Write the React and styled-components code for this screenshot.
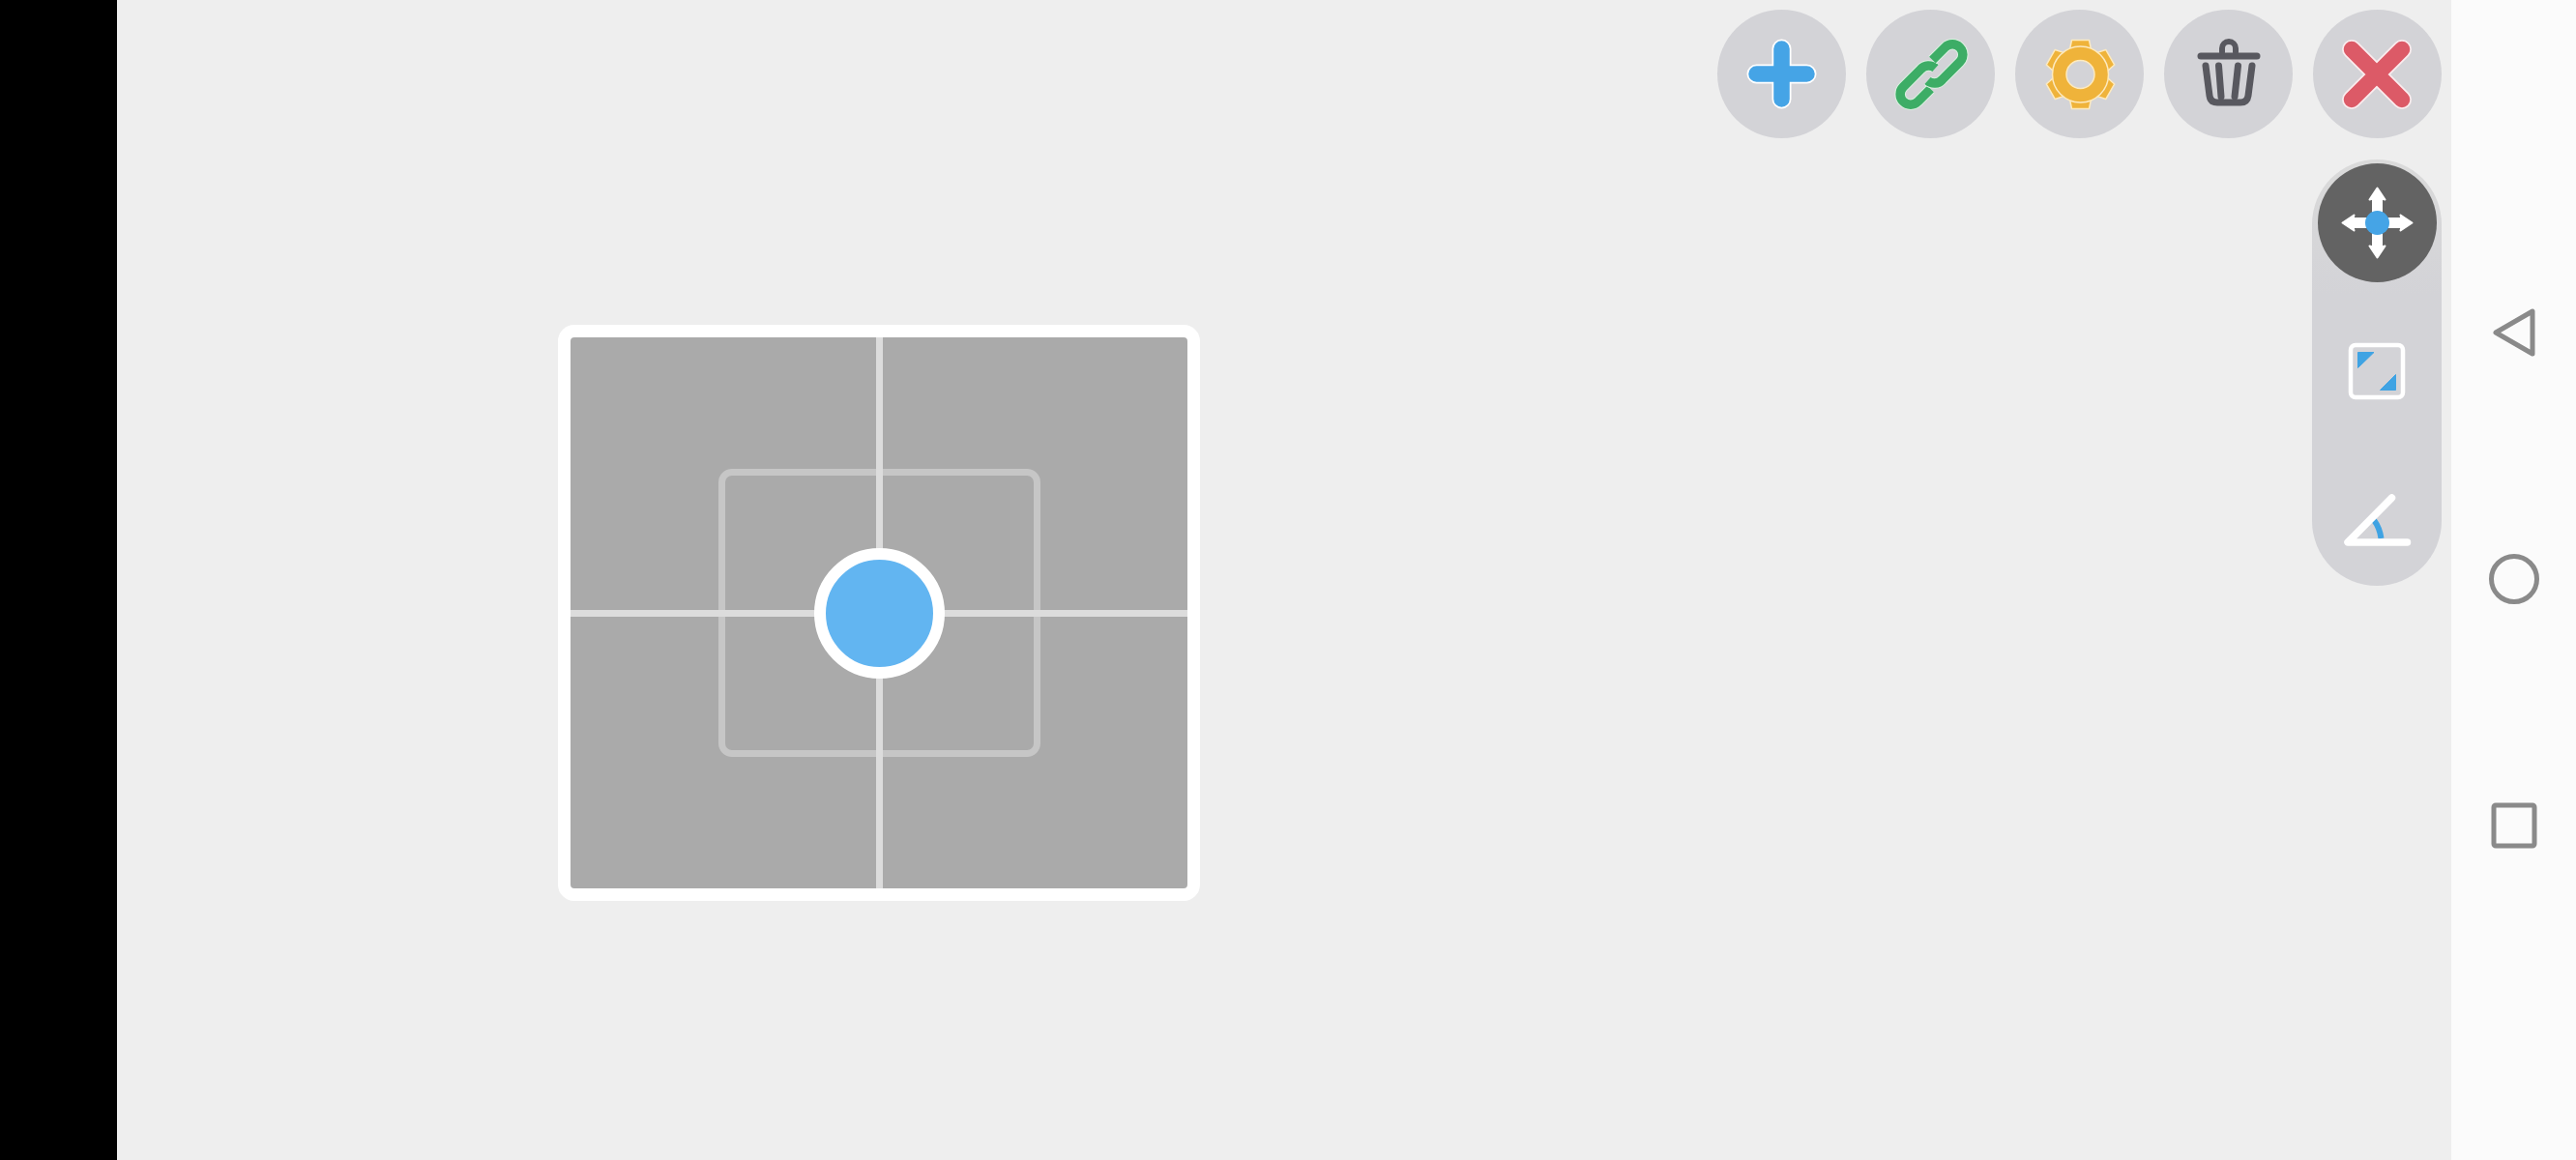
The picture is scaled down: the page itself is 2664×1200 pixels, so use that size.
import React from 'react';
import styled, { createGlobalStyle } from 'styled-components';

const GlobalStyle = createGlobalStyle`
  html, body {
    margin: 0;
    padding: 0;
    height: 1200px;
    overflow: hidden;
    background: #eeeeee;
    font-family: "Liberation Sans", sans-serif;
  }
`;

const Page = styled.div`
  display: flex;
  width: 2664px;
  height: 1200px;
  overflow: hidden;
`;

const LeftBar = styled.div`
  flex: 0 0 121px;
  background: #000;
`;

const Main = styled.main`
  flex: 1;
  display: flex;
  justify-content: space-between;
  align-items: flex-start;
  background: #eeeeee;
  padding: 10px 10px 0 456px;
`;

const Card = styled.div`
  width: 664px;
  height: 596px;
  margin-top: 326px;
  box-sizing: border-box;
  border: 13px solid #fff;
  border-radius: 17px;
  background: #aaaaaa;
  display: grid;
  place-items: center;
  overflow: hidden;

  & > * {
    grid-area: 1 / 1;
  }
`;

const VLine = styled.div`
  width: 7px;
  height: 100%;
  background: #dcdcdc;
`;

const HLine = styled.div`
  width: 100%;
  height: 7px;
  background: #dcdcdc;
`;

const GuideFrame = styled.div`
  width: 333px;
  height: 298px;
  box-sizing: border-box;
  border: 7px solid rgba(220, 220, 220, 0.55);
  border-radius: 14px;
`;

const Handle = styled.div`
  width: 135px;
  height: 135px;
  box-sizing: border-box;
  border: 12px solid #fff;
  border-radius: 50%;
  background: #62b5f1;
`;

const Tools = styled.div`
  display: flex;
  flex-direction: column;
  align-items: flex-end;
  gap: 22px;
`;

const TopRow = styled.div`
  display: flex;
  gap: 21px;
`;

const RoundButton = styled.div`
  width: 133px;
  height: 133px;
  border-radius: 50%;
  background: #d3d3d7;

  svg {
    display: block;
  }
`;

const SidePanel = styled.div`
  width: 134px;
  box-sizing: border-box;
  padding: 4px 0 6px;
  border-radius: 67px;
  background: linear-gradient(#dadada, #d3d3d7 140px);
  display: flex;
  flex-direction: column;
  align-items: center;
  gap: 31px;
`;

const SideItem = styled.div`
  width: 123px;
  height: 123px;
  border-radius: 50%;
  background: ${(p) => (p.$active ? '#636363' : 'transparent')};

  svg {
    display: block;
  }
`;

const NavBar = styled.nav`
  flex: 0 0 129px;
  background: #fbfbfb;
  display: flex;
  flex-direction: column;
  align-items: center;
  justify-content: center;
  gap: 195px;
  padding-bottom: 2px;
  box-sizing: border-box;

  svg {
    display: block;
  }
`;

const BLUE = '#45a4e6';

const Icon133 = ({ children }) => (
  <svg width="133" height="133" viewBox="0 0 133 133" fill="none">
    {children}
  </svg>
);

const Icon123 = ({ children }) => (
  <svg width="123" height="123" viewBox="0 0 123 123" fill="none">
    {children}
  </svg>
);

const PlusIcon = () => {
  const d = 'M66.5 40.5V92.5M40.5 66.5H92.5';
  return (
    <Icon133>
      <path d={d} stroke="#fff" strokeWidth="20" strokeLinecap="round" />
      <path d={d} stroke={BLUE} strokeWidth="16.5" strokeLinecap="round" />
    </Icon133>
  );
};

// two open chain links, the second is the first turned half way round the centre
const LinkIcon = () => {
  const link = 'M68.5 52L81.5 39A10.7 10.7 0 0 1 96.7 54.2L78.5 72.5A10.7 10.7 0 0 1 63.5 73.5';
  return (
    <Icon133>
      <g transform="rotate(180 67.5 67)">
        <path d={link} stroke="#d9f2e0" strokeWidth="11.5" />
        <path d={link} stroke="#3dad66" strokeWidth="9.5" />
      </g>
      <path d={link} stroke="#d9f2e0" strokeWidth="11.5" />
      <path d={link} stroke="#3dad66" strokeWidth="9.5" />
    </Icon133>
  );
};

const GearIcon = () => (
  <Icon133>
    {[0, 60, 120, 180, 240, 300].map((a) => (
      <polygon
        key={a}
        points="58.5,31.5 76.5,31.5 79.5,46 55.5,46"
        transform={`rotate(${a} 67.5 67)`}
        fill="#efb33a"
        stroke="#fdeabf"
        strokeWidth="1.5"
        strokeLinejoin="round"
      />
    ))}
    <circle cx="67.5" cy="67" r="29" fill="#efb33a" stroke="#fdeabf" strokeWidth="1.5" />
    <circle cx="67.5" cy="67" r="14.5" fill="#d3d3d7" stroke="#fdeabf" strokeWidth="1.5" />
  </Icon133>
);

const TrashIcon = () => (
  <Icon133>
    <g stroke="#58585f" strokeWidth="7" strokeLinecap="round" strokeLinejoin="round">
      <path d="M38 48H96" />
      <path d="M60 44V40A7 7 0 0 1 74 40V44" strokeWidth="6" />
      <path d="M43 58L47 89Q48 96 55 96H79Q86 96 87 89L91 58" />
      <path d="M56.5 58L59 90" />
      <path d="M76.5 58L73 90" />
    </g>
  </Icon133>
);

const CloseIcon = () => {
  const d = 'M40 41L92 93M92 41L40 93';
  return (
    <Icon133>
      <path d={d} stroke="#fbecee" strokeWidth="20" strokeLinecap="round" />
      <path d={d} stroke="#dc5a67" strokeWidth="16.5" strokeLinecap="round" />
    </Icon133>
  );
};

const MoveIcon = () => (
  <Icon123>
    <g transform="translate(61.5 61.5)" fill="#fff" stroke="#fff" strokeWidth="2" strokeLinejoin="round">
      {[0, 90, 180, 270].map((a) => (
        <path key={a} transform={`rotate(${a})`} d="M0 -36L8 -24L4.5 -25V-8H-4.5V-25L-8 -24Z" />
      ))}
    </g>
    <circle cx="61.5" cy="61.5" r="12.5" fill={BLUE} />
  </Icon123>
);

const ResizeIcon = () => (
  <Icon123>
    <rect x="34" y="34" width="54" height="54" rx="5" stroke="#fff" strokeWidth="4.5" />
    <path d="M41.5 41.5H58L41.5 57.5Z" fill="#3fa3e3" stroke="#3fa3e3" strokeWidth="1" strokeLinejoin="round" />
    <path d="M80.5 64.5V80.5H64.5Z" fill="#3fa3e3" stroke="#3fa3e3" strokeWidth="1" strokeLinejoin="round" />
  </Icon123>
);

const AngleIcon = () => (
  <Icon123>
    <path d="M58 61Q64 69 65.5 80" stroke="#3fa3e3" strokeWidth="6" />
    <path d="M76.5 38L31 84H92.5" stroke="#fff" strokeWidth="7.5" strokeLinecap="round" strokeLinejoin="round" />
  </Icon123>
);

const NavIcon = ({ children }) => (
  <svg width="60" height="60" viewBox="0 0 60 60" fill="none" stroke="#8a8a8a" strokeWidth="5" strokeLinejoin="round">
    {children}
  </svg>
);

const topButtons = [PlusIcon, LinkIcon, GearIcon, TrashIcon, CloseIcon];
const sideItems = [MoveIcon, ResizeIcon, AngleIcon];

const App = () => {
  return (
    <Page>
      <GlobalStyle />
      <LeftBar />
      <Main>
        <Card>
          <VLine />
          <HLine />
          <GuideFrame />
          <Handle />
        </Card>
        <Tools>
          <TopRow>
            {topButtons.map((ButtonIcon, i) => (
              <RoundButton key={i}>
                <ButtonIcon />
              </RoundButton>
            ))}
          </TopRow>
          <SidePanel>
            {sideItems.map((ItemIcon, i) => (
              <SideItem key={i} $active={i === 0}>
                <ItemIcon />
              </SideItem>
            ))}
          </SidePanel>
        </Tools>
      </Main>
      <NavBar>
        <NavIcon>
          <path d="M11 30L49 8V52Z" />
        </NavIcon>
        <NavIcon>
          <circle cx="30" cy="30" r="23.5" />
        </NavIcon>
        <NavIcon>
          <rect x="9" y="9" width="42" height="42" rx="2" />
        </NavIcon>
      </NavBar>
    </Page>
  );
};

export default App;
